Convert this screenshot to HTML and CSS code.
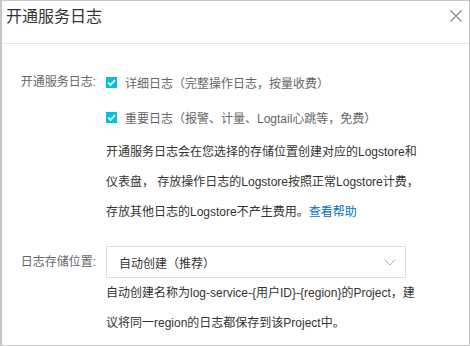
FILE: index.html
```html
<!DOCTYPE html>
<html lang="zh-CN">
<head>
    <meta charset="UTF-8">
    <meta name="viewport" content="width=device-width, initial-scale=1.0">
    <title>开通服务日志</title>
    <link rel="stylesheet" href="styles.css">
</head>
<body>

    <div class="dialog">
        <div class="dialog-header">
            <div class="dialog-title">开通服务日志</div>
            <button class="close" aria-label="关闭">
                <svg width="12" height="12" viewBox="0 0 12 12">
                    <path d="M0.5 0.5 L11.5 11.5 M11.5 0.5 L0.5 11.5" stroke="#888" stroke-width="1.2" fill="none"/>
                </svg>
            </button>
        </div>

        <div class="dialog-body">
            <div class="form-row">
                <div class="form-label">开通服务日志:</div>
                <div class="form-control">
                    <label class="check">
                        <span class="box">
                            <svg width="9" height="9" viewBox="0 0 9 9"><path d="M1.2 4.6 L3.6 7 L7.9 2" stroke="#fff" stroke-width="1.8" fill="none"/></svg>
                        </span>
                        详细日志（完整操作日志，按量收费）
                    </label>
                    <label class="check">
                        <span class="box">
                            <svg width="9" height="9" viewBox="0 0 9 9"><path d="M1.2 4.6 L3.6 7 L7.9 2" stroke="#fff" stroke-width="1.8" fill="none"/></svg>
                        </span>
                        重要日志（报警、计量、Logtail心跳等，免费）
                    </label>
                    <p class="desc">
                        开通服务日志会在您选择的存储位置创建对应的Logstore和<br>
                        仪表盘， 存放操作日志的Logstore按照正常Logstore计费，<br>
                        存放其他日志的Logstore不产生费用。<a href="#">查看帮助</a>
                    </p>
                </div>
            </div>

            <div class="form-row select-row">
                <div class="form-label">日志存储位置:</div>
                <div class="form-control">
                    <div class="select">
                        <span>自动创建（推荐）</span>
                        <svg width="12" height="7" viewBox="0 0 12 7"><path d="M0.5 0.5 L6 6 L11.5 0.5" stroke="#aaa" stroke-width="1" fill="none"/></svg>
                    </div>
                    <p class="help">
                        自动创建名称为log-service-{用户ID}-{region}的Project，建<br>
                        议将同一region的日志都保存到该Project中。
                    </p>
                </div>
            </div>
        </div>
    </div>

</body>
</html>
```

FILE: styles.css
```css
body {
    margin: 0;
    font-family: "Liberation Sans", "Noto Sans CJK SC", sans-serif;
    font-size: 12px;
    background-color: #fff;
}

.dialog {
    width: 470px;
    height: 346px;
    box-sizing: border-box;
    border: 1px solid #c6c6c6;
    border-left-width: 2px;
    overflow: hidden;
}

.dialog-header {
    height: 43px;
    padding: 4px 7px 0 4px;
    box-sizing: border-box;
    display: flex;
    justify-content: space-between;
    align-items: flex-start;
    border-bottom: 1px solid #e5e5e5;
}

.dialog-title {
    font-size: 16px;
    line-height: 24px;
    color: #333;
}

.close {
    border: none;
    background: none;
    padding: 0;
    margin-top: 5px;
    width: 12px;
    height: 12px;
    cursor: pointer;
    display: flex;
}

.dialog-body {
    padding-top: 28px;
}

.form-row {
    display: flex;
}

.form-label {
    width: 94px;
    flex-shrink: 0;
    text-align: right;
    line-height: 20px;
    color: #666;
}

.form-control {
    margin-left: 10px;
    white-space: nowrap;
}

.check {
    display: flex;
    align-items: center;
    height: 20px;
    margin-bottom: 15px;
    color: #666;
}

.box {
    width: 11px;
    height: 11px;
    background-color: #00c1de;
    margin-right: 8px;
    display: flex;
    align-items: center;
    justify-content: center;
}

.desc {
    margin: 0;
    line-height: 30px;
    color: #333;
    margin-top: -5px;
}

.desc a {
    color: #0070cc;
    text-decoration: none;
}

.select-row {
    margin-top: 19px;
}

.select-row .form-label {
    line-height: 32px;
}

.select {
    width: 300px;
    height: 32px;
    box-sizing: border-box;
    border: 1px solid #dcdcdc;
    padding: 0 9px 0 12px;
    display: flex;
    align-items: center;
    justify-content: space-between;
    color: #333;
}

.help {
    margin: 0;
    line-height: 30px;
    color: #333;
}
```
